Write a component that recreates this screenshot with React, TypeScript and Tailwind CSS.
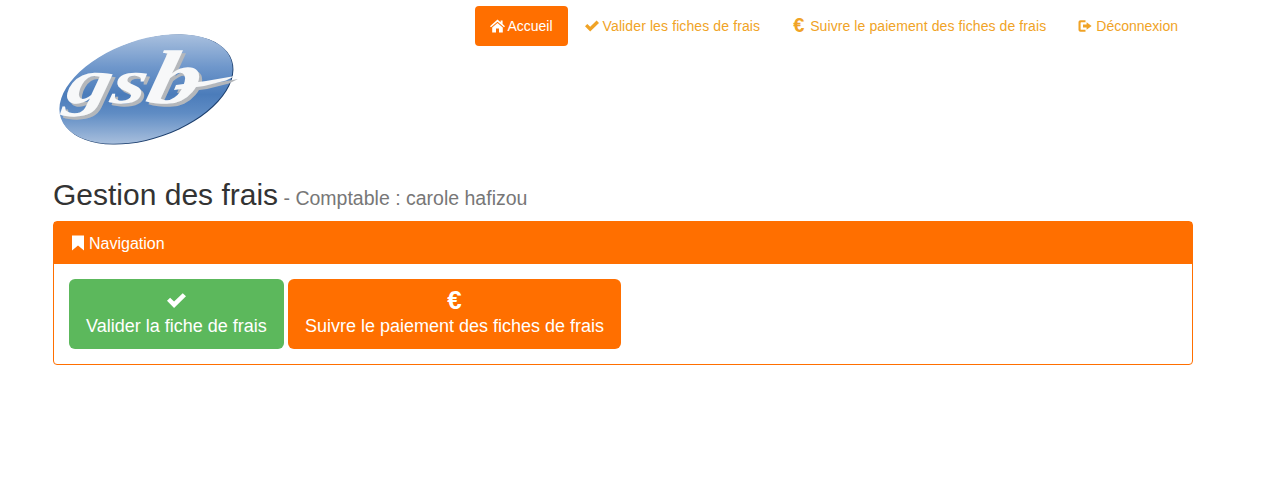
const font = { fontFamily: '"Liberation Sans", Arial, sans-serif' };

function Home({ className = "" }: { className?: string }) {
  return (
    <svg viewBox="0 0 15 14" className={className} fill="currentColor">
      <path d="M7.5 0.6 L10.6 3.3 V1.6 H12.6 V5 L15 7.2 L14 8.2 L7.5 2.7 L1 8.2 L0 7.2 Z" />
      <path d="M7.5 3.9 L12.8 8.4 V13.6 H9 V9.5 H6 V13.6 H2.2 V8.4 Z" />
    </svg>
  );
}
function Ok({ className = "" }: { className?: string }) {
  return (
    <svg viewBox="0 0 14 14" className={className} fill="currentColor">
      <path d="M0 7.2 L2.3 4.9 L5.2 7.8 L11.6 1.6 L14 3.9 L5.2 12.5 Z" />
    </svg>
  );
}
function Logout({ className = "" }: { className?: string }) {
  return (
    <svg viewBox="0 0 14 14" className={className} fill="currentColor">
      <path d="M0.5 3.2 C0.5 2 1.4 1.2 2.5 1.2 H7.5 V3.2 H3.2 C2.8 3.2 2.6 3.4 2.6 3.8 V10.2 C2.6 10.6 2.8 10.8 3.2 10.8 H7.5 V12.8 H2.5 C1.4 12.8 0.5 12 0.5 10.8 Z" />
      <path d="M5 5.6 H8.6 V3.2 L13.6 7 L8.6 10.8 V8.4 H5 Z" />
    </svg>
  );
}
function Bookmark({ className = "" }: { className?: string }) {
  return (
    <svg viewBox="0 0 14 16" className={className} fill="currentColor">
      <path d="M1 0.5 H13 V15.5 L7 10.5 L1 15.5 Z" />
    </svg>
  );
}

function Logo() {
  return (
    <svg width="190" height="120" viewBox="0 0 190 120" className="block">
      <defs>
        <linearGradient id="oval" gradientUnits="userSpaceOnUse" x1="88" y1="1" x2="88" y2="111" gradientTransform="rotate(19 88 56)">
          <stop offset="0" stopColor="#a9c0de" />
          <stop offset="0.3" stopColor="#6f97cb" />
          <stop offset="0.55" stopColor="#4b7cba" />
          <stop offset="0.72" stopColor="#5f8cc4" />
          <stop offset="1" stopColor="#a8bfdd" />
        </linearGradient>
        <filter id="lettershadow" x="-10%" y="-10%" width="125%" height="125%">
          <feDropShadow dx="3" dy="3" stdDeviation="0.4" floodColor="#b4b7bb" />
        </filter>
      </defs>
      <g transform="rotate(-19 88 56)">
        <ellipse cx="88.6" cy="56.8" rx="90" ry="49.2" fill="#1c3f6e" />
        <ellipse cx="88" cy="56" rx="90" ry="49" fill="url(#oval)" />
      </g>
      <g filter="url(#lettershadow)">
        <path d="M118 52 L148 48 L177 43 L168 47.5 L146 53 L116 57 Z" fill="#f6f7f8" />
        <text
          transform="translate(6 70) skewX(-12) scale(1.4 1)"
          fontSize="64"
          fill="#f7f8f9"
          style={{ fontFamily: '"Liberation Serif", serif', fontStyle: "italic", fontWeight: 700 }}
        >
          gs<tspan fontSize="76">b</tspan>
        </text>
      </g>
    </svg>
  );
}

export default function App() {
  const link = "flex items-center h-10 rounded text-[14px] text-[#f0a326]";
  return (
    <div style={font} className="w-[1270px] h-[482px] bg-white text-[#333] overflow-hidden pl-[53px]">
      <div className="w-[1140px]">
        <nav className="flex justify-end gap-0.5 pt-1.5">
          <a className="flex items-center px-[15px] h-10 rounded bg-[#ff6f00] text-white text-[14px]">
            <Home className="w-[15px] h-[14px] mr-[2px]" />
            Accueil
          </a>
          <a className={`${link} pl-[15px] pr-4 tracking-[0.11px]`}>
            <Ok className="w-[14px] h-[14px] mr-1" />
            Valider les fiches de frais
          </a>
          <a className={`${link} px-[15px] tracking-[0.09px]`}>
            <span className="font-bold text-[20px] w-[13px] mr-1 leading-none -mt-0.5">€</span>
            Suivre le paiement des fiches de frais
          </a>
          <a className={`${link} px-[15px]`}>
            <Logout className="w-[14px] h-[14px] mr-1" />
            Déconnexion
          </a>
        </nav>
        <div className="ml-[5px] -mt-[13px]">
          <Logo />
        </div>
        <h2 className="mt-[25px] mb-[6px] text-[30px] leading-[33px] font-normal">
          Gestion des frais
          <small className="text-[19.5px] text-[#777] font-normal"> - Comptable : carole hafizou</small>
        </h2>
        <section className="border border-[#ff6f00] rounded bg-white h-[144px]">
          <header className="flex items-center h-[42px] pt-px px-[17px] bg-[#ff6f00] text-white text-[16px]">
            <Bookmark className="w-[14px] h-4 mr-1 -mt-0.5" />
            Navigation
          </header>
          <div className="flex gap-1 p-[15px]">
            <a className="flex flex-col items-center w-[215px] h-[70px] py-[11px] rounded-md bg-[#5cb85c] text-white text-[18px] leading-6">
              <span className="h-6 pb-1 flex items-center"><Ok className="w-[19px] h-[19px]" /></span>
              Valider la fiche de frais
            </a>
            <a className="flex flex-col items-center w-[333px] h-[70px] py-[11px] rounded-md bg-[#ff6f00] text-white text-[18px] leading-6">
              <span className="h-6 pb-1 flex items-center font-bold text-[26px] leading-none">€</span>
              Suivre le paiement des fiches de frais
            </a>
          </div>
        </section>
      </div>
    </div>
  );
}
